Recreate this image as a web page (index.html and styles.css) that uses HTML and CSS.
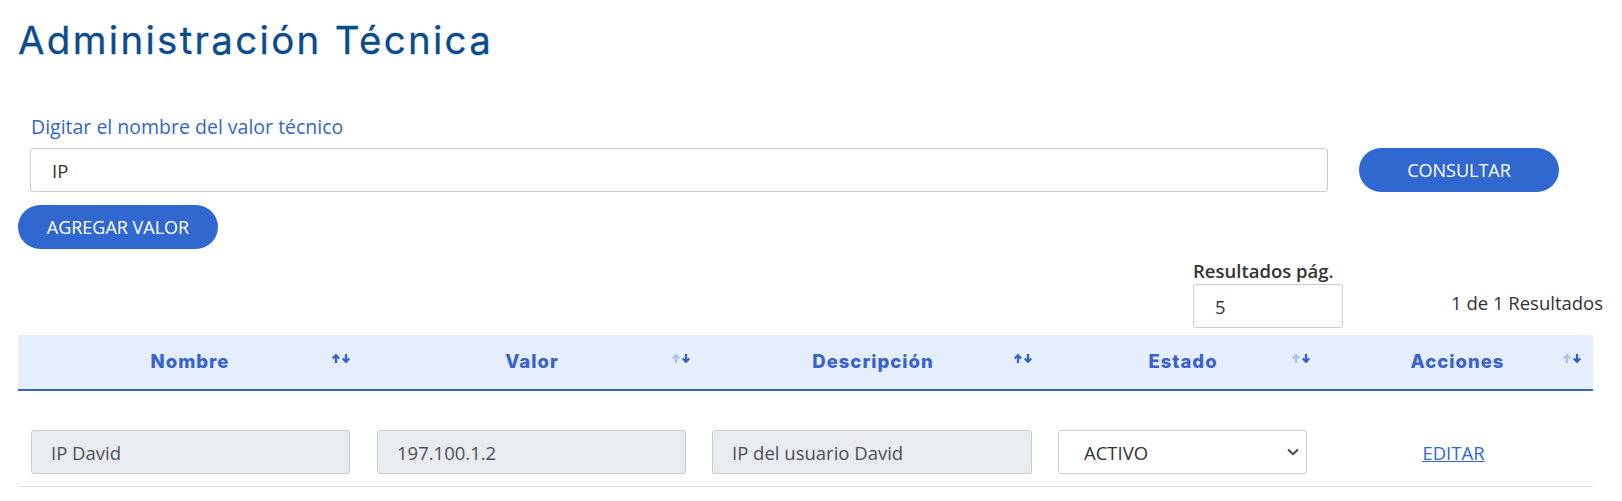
FILE: index.html
```html
<!DOCTYPE html>
<html lang="es">
<head>
<meta charset="utf-8">
<title>Administración Técnica</title>
<link rel="stylesheet" href="styles.css">
</head>
<body>
<div class="page">
  <h1 class="title">Administración Técnica</h1>

  <div class="search">
    <label class="search-label" for="q">Digitar el nombre del valor técnico</label>
    <div class="search-row">
      <input id="q" class="field search-input" type="text" value="IP">
      <button class="btn" type="button">CONSULTAR</button>
    </div>
  </div>

  <button class="btn btn-agregar" type="button">AGREGAR VALOR</button>

  <div class="pager">
    <div class="pager-size">
      <label class="pager-label" for="n">Resultados pág.</label>
      <input id="n" class="field pager-input" type="text" value="5">
    </div>
    <div class="pager-count">1 de 1 Resultados</div>
  </div>

  <div class="table">
    <div class="thead">
      <div class="th"><span>Nombre</span><span class="sort"><svg width="18" height="9" viewBox="0 0 18 9"><path class="dk" d="M4 9V1.5M0.8 4.6 4 1.2 7.2 4.6"/><path class="dk" d="M14 0v7.5M10.8 4.4 14 7.8 17.2 4.4"/></svg></span></div>
      <div class="th"><span>Valor</span><span class="sort"><svg width="18" height="9" viewBox="0 0 18 9"><path class="lt" d="M4 9V1.5M0.8 4.6 4 1.2 7.2 4.6"/><path class="dk" d="M14 0v7.5M10.8 4.4 14 7.8 17.2 4.4"/></svg></span></div>
      <div class="th"><span>Descripción</span><span class="sort"><svg width="18" height="9" viewBox="0 0 18 9"><path class="dk" d="M4 9V1.5M0.8 4.6 4 1.2 7.2 4.6"/><path class="dk" d="M14 0v7.5M10.8 4.4 14 7.8 17.2 4.4"/></svg></span></div>
      <div class="th"><span>Estado</span><span class="sort"><svg width="18" height="9" viewBox="0 0 18 9"><path class="lt" d="M4 9V1.5M0.8 4.6 4 1.2 7.2 4.6"/><path class="dk" d="M14 0v7.5M10.8 4.4 14 7.8 17.2 4.4"/></svg></span></div>
      <div class="th"><span>Acciones</span><span class="sort"><svg width="18" height="9" viewBox="0 0 18 9"><path class="lt" d="M4 9V1.5M0.8 4.6 4 1.2 7.2 4.6"/><path class="dk" d="M14 0v7.5M10.8 4.4 14 7.8 17.2 4.4"/></svg></span></div>
    </div>
    <div class="tr">
      <div class="td td-1"><input class="field cell-input" type="text" value="IP David" disabled></div>
      <div class="td td-2"><input class="field cell-input" type="text" value="197.100.1.2" disabled></div>
      <div class="td td-3"><input class="field cell-input" type="text" value="IP del usuario David" disabled></div>
      <div class="td td-4">
        <div class="select">
          <span>ACTIVO</span>
          <svg width="12" height="8" viewBox="0 0 12 8"><path d="M1 1.5 6 6.2 11 1.5" fill="none" stroke="#444" stroke-width="2"/></svg>
        </div>
      </div>
      <div class="td td-5"><a class="link" href="#">EDITAR</a></div>
    </div>
  </div>
</div>
</body>
</html>
```

FILE: styles.css
```css
* { box-sizing: border-box; }
html, body { margin: 0; padding: 0; background: #fff; }
body {
  font-family: "Open Sans", "Noto Sans", sans-serif;
  color: #333;
  width: 1622px;
  height: 501px;
  overflow: hidden;
}
.page { padding: 15px 0 0 18px; }

.title {
  margin: 0;
  padding-top: 2px;
  font-family: "Inter", "Open Sans", sans-serif;
  font-weight: 400;
  font-size: 38.5px;
  line-height: 46px;
  color: #0b4c8c;
  letter-spacing: 2.3px;
  -webkit-text-stroke: 0.3px #0b4c8c;
}

.search { margin: 52px 0 0 12px; }
.search-label {
  display: block;
  font-size: 19.5px;
  line-height: 24px;
  font-weight: 500;
  color: #3565cc;
  margin-left: 1px;
}
.search-row { display: flex; align-items: center; margin-top: 9px; gap: 31px; }

.field {
  font-family: "Open Sans", "Noto Sans", sans-serif;
  font-size: 18.5px;
  color: #333;
  height: 44px;
  border: 1px solid #ccc;
  border-radius: 3px;
  background: #fff;
  padding: 0 21px;
  outline: none;
}
.search-input { width: 1298px; }

.btn {
  border: 0;
  border-radius: 22px;
  background: #3168d0;
  color: #fff;
  font-family: "Open Sans", "Noto Sans", sans-serif;
  font-size: 18px;
  height: 44px;
  width: 200px;
  padding: 0;
  cursor: pointer;
}
.btn-agregar { margin-top: 13px; display: block; }

.pager { display: flex; align-items: flex-end; margin: 10px 0 0 1175px; }
.pager-size { display: flex; flex-direction: column; }
.pager-label { font-size: 18.5px; font-weight: 600; line-height: 24px; color: #333; margin-bottom: 1px; }
.pager-input { width: 150px; height: 44px; padding: 0 21px; }
.pager-count { font-size: 18.5px; color: #333; margin: 0 0 13px 108px; white-space: nowrap; }

.table { margin-top: 7px; width: 1575px; }
.thead, .tr {
  display: grid;
  grid-template-columns: 344px 340px 342px 278px 271px;
}
.thead {
  height: 56px;
  background: #e4eefc;
  border-bottom: 2px solid #3366cc;
}
.th {
  display: flex;
  align-items: center;
  justify-content: center;
  position: relative;
  font-family: "Inter", "Open Sans", sans-serif;
  font-weight: 800;
  font-size: 18.5px;
  letter-spacing: 1px;
  color: #3a62cc;
  padding-bottom: 2px;
}
.sort { position: absolute; right: 12px; top: 19px; line-height: 0; }
.sort path { fill: none; stroke-width: 2.2; }
.sort .dk { stroke: #2c5fd0; }
.sort .lt { stroke: #a9c1ef; }

.tr {
  align-items: center;
  padding: 39px 0 12px;
  border-bottom: 1px solid #dee2e6;
}
.td-1 { padding: 0 12px 0 13px; }
.td-2 { padding: 0 16px 0 15px; }
.td-3 { padding: 0 12px 0 10px; }
.td-4 { padding: 0 15px 0 14px; }
.td-5 { text-align: center; padding-right: 8px; }
.cell-input { width: 100%; background: #e9ecef; color: #495057; padding: 0 19px; }
.select {
  width: 100%;
  height: 44px;
  border: 1px solid #ccc;
  border-radius: 3px;
  display: flex;
  align-items: center;
  justify-content: space-between;
  padding: 0 7px 0 25px;
  font-size: 18.5px;
  color: #333;
}
.link { color: #3366cc; font-size: 18.5px; text-decoration: underline; }
```
